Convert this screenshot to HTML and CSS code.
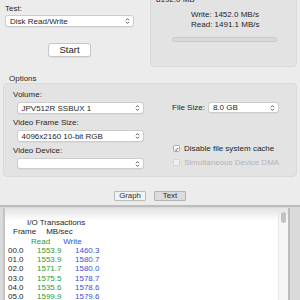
FILE: index.html
```html
<!DOCTYPE html>
<html>
<head>
<meta charset="utf-8">
<link rel="stylesheet" href="styles.css">
</head>
<body>
<div class="top">
  <div class="test-col">
    <div class="label">Test:</div>
    <div class="select">
      <span>Disk Read/Write</span>
      <svg class="chev" width="5" height="8" viewBox="0 0 5 8"><path d="M1 3.2 L2.5 1.6 L4 3.2 M1 4.8 L2.5 6.4 L4 4.8"/></svg>
    </div>
    <div class="start-row"><button class="start">Start</button></div>
  </div>
  <div class="result-box">
    <div class="size">8192.0 MB</div>
    <div class="rates">
      <div>Write: 1452.0 MB/s</div>
      <div>Read: 1491.1 MB/s</div>
    </div>
    <div class="progress"></div>
  </div>
</div>

<div class="options-title">Options</div>
<div class="options">
  <div class="opt-left">
    <div class="label">Volume:</div>
    <div class="select indent">
      <span>JPV512R SSBUX 1</span>
      <svg class="chev" width="5" height="8" viewBox="0 0 5 8"><path d="M1 3.2 L2.5 1.6 L4 3.2 M1 4.8 L2.5 6.4 L4 4.8"/></svg>
    </div>
    <div class="label gap">Video Frame Size:</div>
    <div class="select indent">
      <span>4096x2160 10-bit RGB</span>
      <svg class="chev" width="5" height="8" viewBox="0 0 5 8"><path d="M1 3.2 L2.5 1.6 L4 3.2 M1 4.8 L2.5 6.4 L4 4.8"/></svg>
    </div>
    <div class="label gap">Video Device:</div>
    <div class="select indent short">
      <span></span>
      <svg class="chev" width="5" height="8" viewBox="0 0 5 8"><path d="M1 3.2 L2.5 1.6 L4 3.2 M1 4.8 L2.5 6.4 L4 4.8"/></svg>
    </div>
  </div>
  <div class="opt-right">
    <div class="filesize">
      <span>File Size:</span>
      <div class="select fs">
        <span>8.0 GB</span>
        <svg class="chev" width="5" height="8" viewBox="0 0 5 8"><path d="M1 3.2 L2.5 1.6 L4 3.2 M1 4.8 L2.5 6.4 L4 4.8"/></svg>
      </div>
    </div>
    <div class="check first">
      <span class="box"><svg width="7" height="7" viewBox="0 0 7 7"><path d="M1.6 3.6 L2.9 5.1 L5.6 1.4"/></svg></span>
      <span>Disable file system cache</span>
    </div>
    <div class="check disabled">
      <span class="box"></span>
      <span>Simultaneous Device DMA</span>
    </div>
  </div>
</div>

<div class="tabs">
  <button class="tab">Graph</button>
  <button class="tab active">Text</button>
</div>

<div class="log">
  <div class="log-panel">
    <div class="log-text">
      <div class="line"><span class="h-title">I/O Transactions</span></div>
      <div class="line"><span class="h-frame">Frame</span><span class="h-mb">MB/sec</span></div>
      <div class="line"><span class="h-read green">Read</span><span class="h-write blue">Write</span></div>
      <div class="row"><span>00.0</span><span class="green">1553.9</span><span class="blue">1460.3</span></div>
      <div class="row"><span>01.0</span><span class="green">1553.9</span><span class="blue">1580.7</span></div>
      <div class="row"><span>02.0</span><span class="green">1571.7</span><span class="blue">1580.0</span></div>
      <div class="row"><span>03.0</span><span class="green">1575.5</span><span class="blue">1578.7</span></div>
      <div class="row"><span>04.0</span><span class="green">1535.6</span><span class="blue">1578.6</span></div>
      <div class="row"><span>05.0</span><span class="green">1599.9</span><span class="blue">1579.6</span></div>
    </div>
    <div class="scrollbar"><div class="thumb"></div></div>
  </div>
</div>
</body>
</html>
```

FILE: styles.css
```css
* { box-sizing: border-box; }
html, body { margin: 0; padding: 0; }
body {
  width: 300px;
  height: 300px;
  overflow: hidden;
  background: #ececec;
  font-family: "Liberation Sans", Arial, sans-serif;
  font-size: 8px;
  color: #262626;
}

.top { display: flex; height: 70px; }
.test-col { flex: none; width: 134px; padding: 4px 0 0 5px; }
.label { height: 10px; line-height: 10px; white-space: nowrap; }
.label.gap { margin-top: 4px; }

.select {
  display: flex;
  align-items: center;
  justify-content: space-between;
  height: 12px;
  margin-top: 1px;
  padding: 0 3px 0 4px;
  background: #fff;
  border: 1px solid #cdcdcd;
  border-radius: 3px;
  box-shadow: 0 0.5px 0.5px rgba(0,0,0,0.08);
  white-space: nowrap;
}
.select.indent { margin-left: 4px; width: 127px; padding-left: 3.5px; margin-top: 2px; }
.select.indent.short { height: 11px; }
.chev path { fill: none; stroke: #4a4a4a; stroke-width: 0.9; }

.start-row { display: flex; justify-content: center; margin-top: 16px; }
.start {
  width: 43px;
  height: 14px;
  padding: 0;
  background: #fff;
  border: 1px solid #c6c6c6;
  border-radius: 3px;
  box-shadow: 0 0.5px 0.5px rgba(0,0,0,0.1);
  font-family: "Liberation Sans", Arial, sans-serif;
  font-size: 9.5px;
  line-height: 12px;
  color: #222;
}

.result-box {
  flex: none;
  width: 147px;
  height: 81px;
  margin: -14px 0 0 16px;
  padding: 8px 0 0 5px;
  background: #e3e3e3;
  border: 1px solid #d9d9d9;
  border-radius: 4px;
}
.size { line-height: 10px; }
.rates { margin: 5px 0 0 35px; line-height: 10px; }
.progress {
  width: 105px;
  height: 4.5px;
  margin: 7px 0 0 16px;
  background: #d9d9d9;
  border: 0.5px solid #c8c8c8;
  border-radius: 3px;
}

.options-title { margin-top: 4px; height: 9px; line-height: 9px; padding-left: 9px; }
.options {
  display: flex;
  height: 94px;
  margin: 0 3px;
  padding: 6px 0 0 9px;
  background: #e3e3e3;
  border: 1px solid #d9d9d9;
  border-radius: 4px;
}
.opt-left { flex: none; width: 131px; }
.opt-right { flex: none; margin-left: 28px; }

.filesize { display: flex; align-items: center; gap: 3px; margin-top: 12px; height: 11px; }
.select.fs { width: 71px; height: 11px; margin-top: 0; padding-left: 4px; }

.check { display: flex; align-items: center; height: 10px; gap: 4px; padding-left: 1px; }
.check.first { margin-top: 30px; }
.check.disabled { margin-top: 4px; color: #b4b4b4; }
.box {
  display: flex;
  width: 7px;
  height: 7px;
  background: #fff;
  border: 0.5px solid #a8a8a8;
  border-radius: 1.5px;
}
.box path { fill: none; stroke: #2a2a2a; stroke-width: 1; }
.check.disabled .box { background: #f1f1f1; border-color: #d2d2d2; }

.tabs { display: flex; justify-content: center; gap: 7.5px; margin-top: 14px; height: 10px; }
.tab {
  width: 32.5px;
  height: 9.5px;
  padding: 0;
  background: #f3f3f3;
  border: 1px solid #bcbcbc;
  border-radius: 1px;
  font-family: "Liberation Sans", Arial, sans-serif;
  font-size: 7.8px;
  line-height: 7px;
  color: #2a2a2a;
}
.tab.active { background: #dcdcdc; border-color: #b3b3b3; }

.log {
  display: flex;
  height: 95px;
  margin-top: 4px;
  padding: 1px 10px 0 3px;
  background: #dadada;
  border-top: 2px solid #bdbdbd;
}
.log-panel {
  flex: 1;
  display: flex;
  background: #fff;
  border-left: 2px solid #c3c3c3;
  border-right: 2px solid #bdbdbd;
}
.log-text {
  flex: 1;
  padding: 10px 0 0 3px;
  background: linear-gradient(#e2e2e2, #fff 13px);
  color: #1e1e1e;
}
.line { height: 9.3px; line-height: 9.3px; white-space: nowrap; }
.row { display: grid; grid-template-columns: 29px 38px auto; height: 9.3px; line-height: 9.3px; }
.h-title { margin-left: 19px; }
.h-frame { margin-left: 5px; }
.h-mb { margin-left: 10px; }
.h-read { margin-left: 23px; }
.h-write { margin-left: 13px; }
.green { color: #2f9a2f; }
.blue { color: #3553d4; }

.scrollbar {
  flex: none;
  width: 10px;
  background: linear-gradient(#e6e6e6, #f6f6f6 13px);
  border-left: 1px solid #e6e6e6;
  padding: 3.7px 0 0 2px;
}
.thumb { width: 5px; height: 11px; border-radius: 3px; background: #c3c3c3; }
```
